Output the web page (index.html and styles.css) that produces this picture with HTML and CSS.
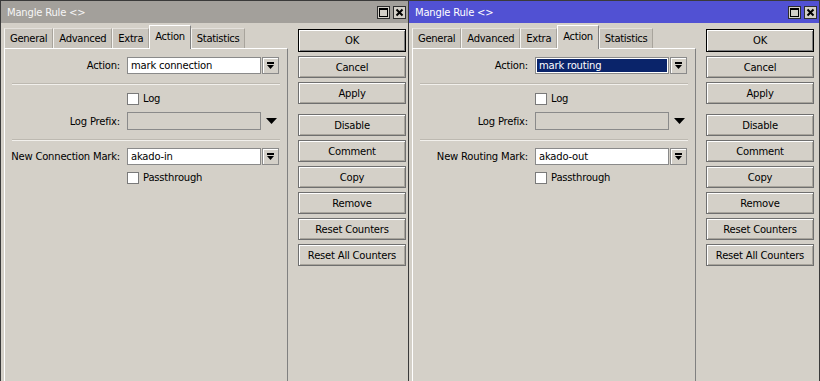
FILE: index.html
```html
<!DOCTYPE html>
<html lang="en">
<head>
    <meta charset="UTF-8">
    <title>Mangle Rule</title>
    <link rel="stylesheet" href="styles.css">
</head>
<body>
    <!-- left window: inactive, mark connection -->
    <div class="window">
        <div class="titlebar">
            <span class="title">Mangle Rule &lt;&gt;</span>
            <div class="tb-buttons">
                <span class="tb-btn"><svg width="11" height="11" viewBox="0 0 11 11"><rect x="1.5" y="1.5" width="8" height="8" fill="none" stroke="#000" stroke-width="1"/><rect x="1" y="1" width="9" height="2" fill="#000"/></svg></span>
                <span class="tb-btn"><svg width="11" height="11" viewBox="0 0 11 11"><path d="M2.5 2.5 L8.5 8.5 M8.5 2.5 L2.5 8.5" stroke="#000" stroke-width="2"/></svg></span>
            </div>
        </div>
        <div class="content">
            <div class="tabs-col">
                <div class="tabs">
                    <div class="tab">General</div>
                    <div class="tab">Advanced</div>
                    <div class="tab">Extra</div>
                    <div class="tab active">Action</div>
                    <div class="tab">Statistics</div>
                </div>
                <div class="panel">
                    <div class="row first">
                        <span class="lbl">Action:</span>
                        <div class="field">mark connection</div>
                        <span class="drop"><svg width="9" height="9" viewBox="0 0 9 9"><rect x="1" y="1" width="7" height="2" fill="#000"/><polygon points="1,4 8,4 4.5,8" fill="#000"/></svg></span>
                    </div>
                    <div class="sep"></div>
                    <div class="row check-row"><span class="check"></span>Log</div>
                    <div class="row prefix">
                        <span class="lbl">Log Prefix:</span>
                        <div class="field disabled"></div>
                        <span class="arrow"><svg width="11" height="6" viewBox="0 0 11 6"><polygon points="0,0 11,0 5.5,6" fill="#000"/></svg></span>
                    </div>
                    <div class="sep"></div>
                    <div class="row mark">
                        <span class="lbl">New Connection Mark:</span>
                        <div class="field">akado-in</div>
                        <span class="drop"><svg width="9" height="9" viewBox="0 0 9 9"><rect x="1" y="1" width="7" height="2" fill="#000"/><polygon points="1,4 8,4 4.5,8" fill="#000"/></svg></span>
                    </div>
                    <div class="row check-row pass"><span class="check"></span>Passthrough</div>
                </div>
            </div>
            <div class="buttons">
                <div class="btn default">OK</div>
                <div class="btn">Cancel</div>
                <div class="btn">Apply</div>
                <div class="btn gap">Disable</div>
                <div class="btn">Comment</div>
                <div class="btn">Copy</div>
                <div class="btn">Remove</div>
                <div class="btn">Reset Counters</div>
                <div class="btn">Reset All Counters</div>
            </div>
        </div>
    </div>

    <!-- right window: active, mark routing -->
    <div class="window active-window">
        <div class="titlebar">
            <span class="title">Mangle Rule &lt;&gt;</span>
            <div class="tb-buttons">
                <span class="tb-btn"><svg width="11" height="11" viewBox="0 0 11 11"><rect x="1.5" y="1.5" width="8" height="8" fill="none" stroke="#000" stroke-width="1"/><rect x="1" y="1" width="9" height="2" fill="#000"/></svg></span>
                <span class="tb-btn"><svg width="11" height="11" viewBox="0 0 11 11"><path d="M2.5 2.5 L8.5 8.5 M8.5 2.5 L2.5 8.5" stroke="#000" stroke-width="2"/></svg></span>
            </div>
        </div>
        <div class="content">
            <div class="tabs-col">
                <div class="tabs">
                    <div class="tab">General</div>
                    <div class="tab">Advanced</div>
                    <div class="tab">Extra</div>
                    <div class="tab active">Action</div>
                    <div class="tab">Statistics</div>
                </div>
                <div class="panel">
                    <div class="row first">
                        <span class="lbl">Action:</span>
                        <div class="field selected"><span class="sel-text">mark routing</span></div>
                        <span class="drop"><svg width="9" height="9" viewBox="0 0 9 9"><rect x="1" y="1" width="7" height="2" fill="#000"/><polygon points="1,4 8,4 4.5,8" fill="#000"/></svg></span>
                    </div>
                    <div class="sep"></div>
                    <div class="row check-row"><span class="check"></span>Log</div>
                    <div class="row prefix">
                        <span class="lbl">Log Prefix:</span>
                        <div class="field disabled"></div>
                        <span class="arrow"><svg width="11" height="6" viewBox="0 0 11 6"><polygon points="0,0 11,0 5.5,6" fill="#000"/></svg></span>
                    </div>
                    <div class="sep"></div>
                    <div class="row mark">
                        <span class="lbl">New Routing Mark:</span>
                        <div class="field">akado-out</div>
                        <span class="drop"><svg width="9" height="9" viewBox="0 0 9 9"><rect x="1" y="1" width="7" height="2" fill="#000"/><polygon points="1,4 8,4 4.5,8" fill="#000"/></svg></span>
                    </div>
                    <div class="row check-row pass"><span class="check"></span>Passthrough</div>
                </div>
            </div>
            <div class="buttons">
                <div class="btn default">OK</div>
                <div class="btn">Cancel</div>
                <div class="btn">Apply</div>
                <div class="btn gap">Disable</div>
                <div class="btn">Comment</div>
                <div class="btn">Copy</div>
                <div class="btn">Remove</div>
                <div class="btn">Reset Counters</div>
                <div class="btn">Reset All Counters</div>
            </div>
        </div>
    </div>
</body>
</html>
```

FILE: styles.css
```css
body {
    margin: 0;
    height: 381px;
    overflow: hidden;
    display: flex;
    background-color: #d4d0c8;
    font-family: "DejaVu Sans", Verdana, sans-serif;
    font-size: 10px;
    letter-spacing: -0.2px;
    color: #000;
}
.window {
    width: 409px;
    flex: none;
    box-sizing: border-box;
    border: 1px solid #3a3a3a;
    border-bottom: none;
    display: flex;
    flex-direction: column;
    background-color: #d4d0c8;
}
.active-window {
    flex: 1;
    border-left: none;
}
.titlebar {
    height: 22px;
    flex: none;
    display: flex;
    align-items: center;
    justify-content: space-between;
    padding: 0 2px 0 6px;
    background-color: #a3a09b;
    color: #f6f6f6;
}
.active-window .titlebar {
    background-color: #5151d3;
    color: #fff;
}
.title {
    font-size: 10px;
}
.tb-buttons {
    display: flex;
    gap: 3px;
}
.tb-btn {
    width: 13px;
    height: 13px;
    box-sizing: border-box;
    border: 1px solid #2e2e2e;
    background-color: #d4d0c8;
    display: flex;
    align-items: center;
    justify-content: center;
}
.content {
    flex: 1;
    display: flex;
}
.tabs-col {
    width: 284px;
    margin-left: 3px;
    display: flex;
    flex-direction: column;
}
.tabs {
    height: 25px;
    display: flex;
    align-items: flex-end;
}
.tab {
    height: 20px;
    box-sizing: border-box;
    padding: 0 5px;
    letter-spacing: -0.3px;
    display: flex;
    align-items: center;
    background-color: #cac6be;
    border-top: 1px solid #e4e1dc;
    border-left: 1px solid #f4f3f0;
    border-right: 1px solid #a8a49c;
}
.tab.active {
    height: 24px;
    margin-bottom: -1px;
    padding: 0 5px 3px;
    background-color: #d4d0c8;
    border-top: 1px solid #fff;
    border-left: 1px solid #fff;
    border-right: 1px solid #808080;
    position: relative;
    z-index: 1;
}
.panel {
    flex: 1;
    border-top: 1px solid #fff;
    border-left: 1px solid #fff;
    border-right: 1px solid #808080;
}
.row {
    display: flex;
    align-items: center;
    height: 17px;
    margin-top: 7px;
}
.row.first {
    margin-top: 8px;
}
.row.prefix {
    height: 18px;
}
.row.pass {
    margin-top: 6px;
}
.lbl {
    width: 115px;
    margin-right: 7px;
    text-align: right;
}
.field {
    width: 134px;
    height: 17px;
    box-sizing: border-box;
    border: 1px solid #8a8a8a;
    background-color: #fff;
    padding: 0 3px;
    display: flex;
    align-items: center;
}
.prefix .field {
    height: 18px;
}
.field.disabled {
    background-color: #d4d0c8;
}
.field.selected {
    padding: 1px;
}
.sel-text {
    flex: 1;
    height: 100%;
    box-sizing: border-box;
    padding: 0 2px;
    display: flex;
    align-items: center;
    background-color: #0a246a;
    color: #fff;
}
.drop {
    width: 17px;
    height: 17px;
    margin-left: 1px;
    box-sizing: border-box;
    border: 1px solid #8a8a8a;
    box-shadow: inset 1px 1px 0 #fff;
    background-color: #d4d0c8;
    display: flex;
    align-items: center;
    justify-content: center;
}
.arrow {
    margin-left: 5px;
    display: flex;
}
.sep {
    margin: 9px 7px 0;
    border-top: 1px solid #bdb9b1;
    border-bottom: 1px solid #f2f0ec;
}
.check-row {
    height: 13px;
    padding-left: 122px;
}
.check {
    width: 12px;
    height: 12px;
    box-sizing: border-box;
    border: 1px solid #7a7a7a;
    background-color: #fff;
    margin-right: 4px;
}
.buttons {
    width: 108px;
    margin-left: 10px;
    padding-top: 6px;
    display: flex;
    flex-direction: column;
    gap: 4px;
}
.btn {
    height: 22px;
    box-sizing: border-box;
    border: 1px solid #6f6f6f;
    box-shadow: inset 1px 1px 0 #fff, inset -1px -1px 0 #a8a49c;
    display: flex;
    align-items: center;
    justify-content: center;
}
.btn.default {
    height: 23px;
    border: 1px solid #000;
    box-shadow: inset 1px 1px 0 #fff, inset -1px -1px 0 #808080;
}
.btn.gap {
    margin-top: 6px;
}
```
